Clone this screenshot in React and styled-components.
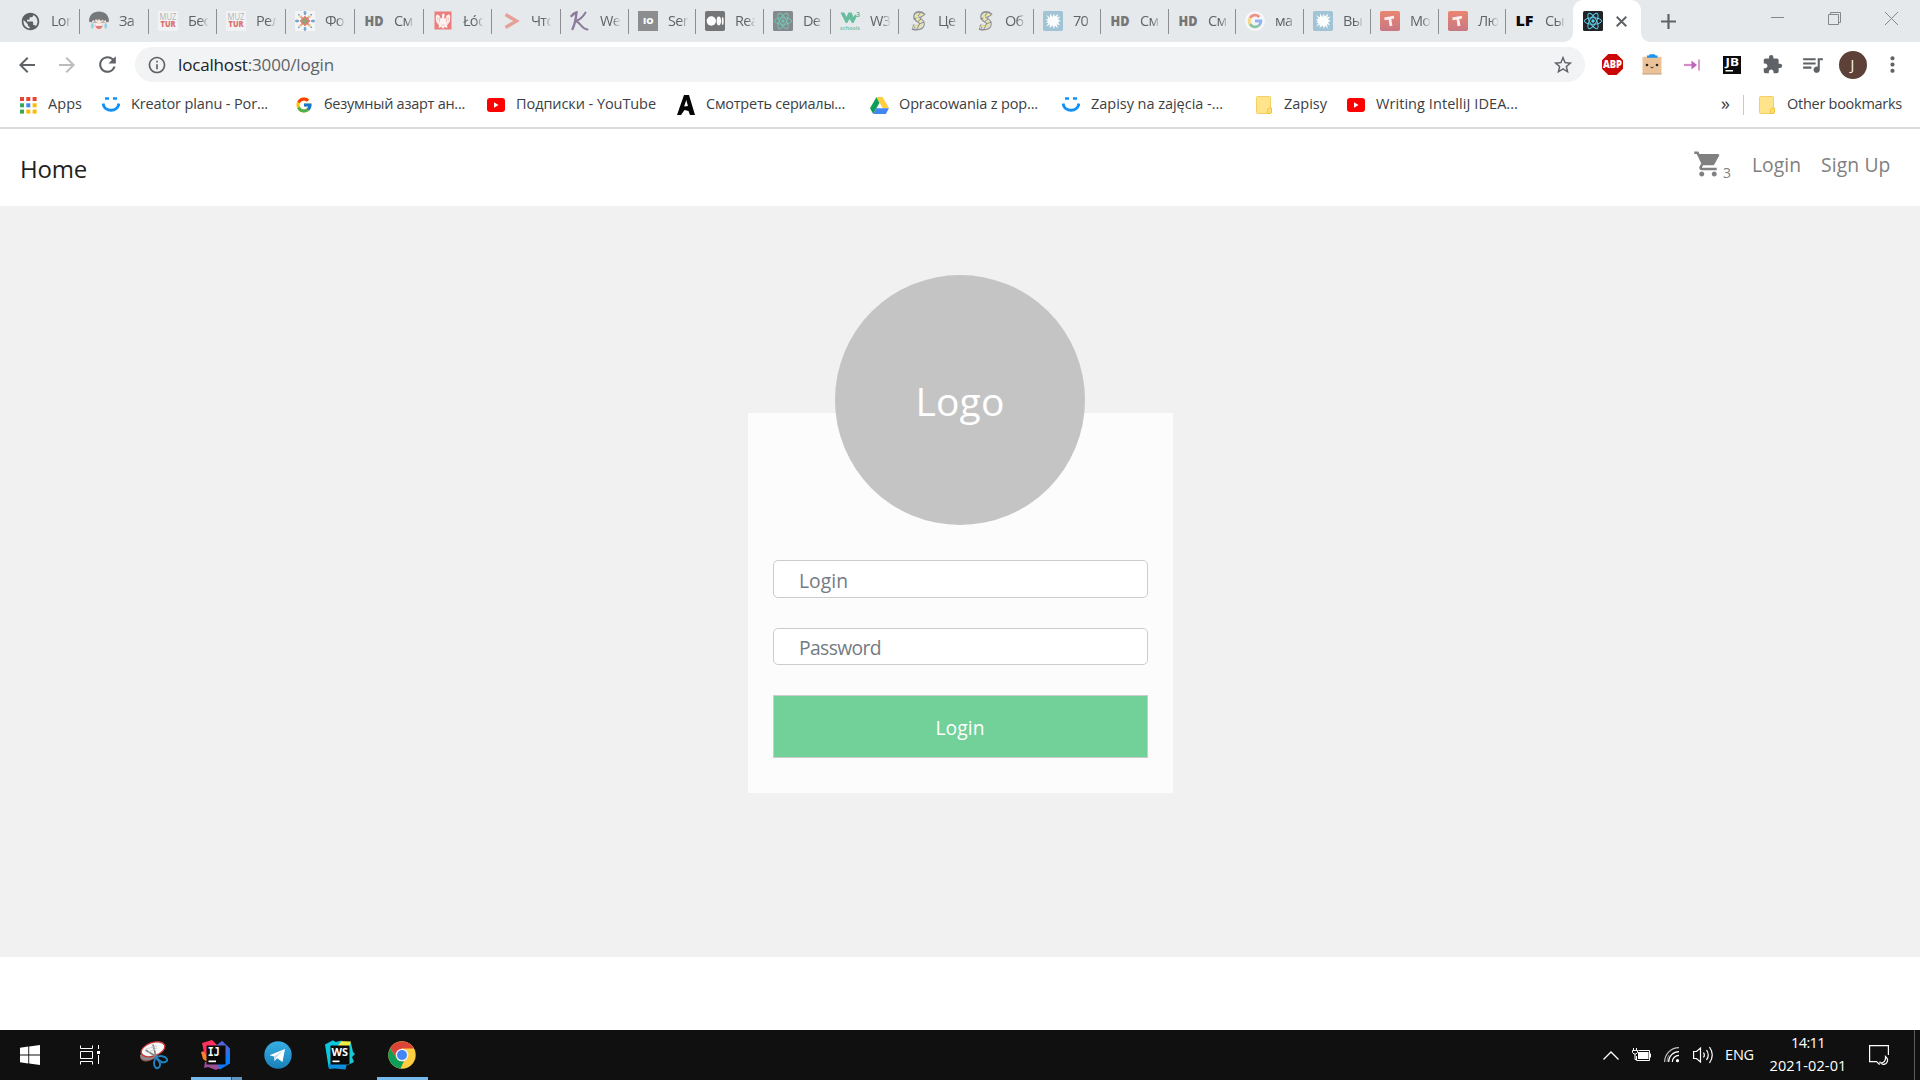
import React, { useLayoutEffect, useRef, useState } from "react";
import styled, { createGlobalStyle, css } from "styled-components";
import {
  MdPublic, MdArrowBack, MdArrowForward, MdRefresh, MdInfoOutline, MdStarBorder,
  MdExtension, MdQueueMusic, MdMoreVert, MdShoppingCart,
} from "react-icons/md";
import { FcGoogle } from "react-icons/fc";

const GlobalStyle = createGlobalStyle`
  * { box-sizing: border-box; }
  body { margin: 0; background: #fff; overflow: hidden; font-family: "Open Sans", "Noto Sans", sans-serif; }
  svg { display: block; flex: none; }
  button, input { font-family: inherit; }
`;

/* ---------- text with a fixed advance width ---------- */
const FitSpan = styled.span`
  display: inline-block;
  white-space: pre;
  flex: none;
`;

function Fit({ width, children }) {
  const ref = useRef(null);
  const [spacing, setSpacing] = useState(0);
  useLayoutEffect(() => {
    const natural = ref.current.getBoundingClientRect().width;
    setSpacing((width - natural) / ref.current.textContent.length);
  }, [width]);
  return <FitSpan ref={ref} style={{ letterSpacing: `${spacing}px` }}>{children}</FitSpan>;
}

/* ---------- small drawings ---------- */
const ReactMark = ({ bg, color }) => (
  <svg width="20" height="20" viewBox="0 0 20 20">
    <rect width="20" height="20" rx="1.5" fill={bg} />
    <g fill="none" stroke={color} strokeWidth="1">
      <ellipse cx="10" cy="10" rx="8.6" ry="3.3" />
      <ellipse cx="10" cy="10" rx="8.6" ry="3.3" transform="rotate(60 10 10)" />
      <ellipse cx="10" cy="10" rx="8.6" ry="3.3" transform="rotate(120 10 10)" />
    </g>
    <circle cx="10" cy="10" r="1.7" fill={color} />
  </svg>
);

const FaceMark = () => (
  <svg width="20" height="20" viewBox="0 0 20 20">
    <ellipse cx="10" cy="12" rx="8" ry="7.500" fill="#f1e4df" />
    <path d="M0 10.500C0 4 4 .5 10 .5S20 4 20 10.500l-2.500 1-1-2.500-1.500 1-1.500-1.500-1.500 1.500L10 8 8.500 9.500 7 8 5.500 10 4 9l-1.500 2.500z" fill="#77787a" />
    <path d="M4.500 11.500q1.500-1.500 3 0M12.500 11.500q1.500-1.500 3 0" stroke="#8a8583" fill="none" />
    <path d="M6.500 14h7c0 2.500-1.500 4-3.500 4s-3.500-1.500-3.500-4z" fill="#de7b79" />
    <path d="M7 14.200h6" stroke="#fff" strokeWidth="1.200" />
    <path d="M3.500 11.500c1.700 2 1.700 5-.2 6.500-2-1.500-2-4 .2-6.500zM16.500 11.500c2.200 2.500 2.200 5 .2 6.500-1.900-1.500-1.900-4.500-.2-6.500z" fill="#8fd2ee" />
  </svg>
);

const MuzMark = () => (
  <svg width="20" height="20" viewBox="0 0 20 20" fontFamily="Open Sans, sans-serif">
    <rect width="20" height="20" fill="#f1f2f3" />
    <text x="1.5" y="8.6" fontSize="8.2" fill="#b4b5b7" textLength="17" lengthAdjust="spacingAndGlyphs">MUZ</text>
    <text x="2.5" y="16.2" fontSize="8" fontWeight="800" fill="#dc7270" textLength="15" lengthAdjust="spacingAndGlyphs">TUR</text>
  </svg>
);

const OrnamentMark = () => (
  <svg width="20" height="20" viewBox="0 0 20 20">
    <rect width="20" height="20" fill="#f4f5f6" />
    <path d="M10 4.500l1.500 2 2.500-.7-.5 2.500 2 1.700-2 1.700.5 2.500-2.500-.7-1.500 2-1.500-2-2.500.7.500-2.500-2-1.700 2-1.700L6 5.800l2.500.7z" fill="#e0796f" />
    <path d="M10 7v6M7 10h6" stroke="#8aa877" strokeWidth="2" />
    <g fill="#6f9fca">
      <path d="M8 1.500h4l-2 2.500zM8 18.500h4L10 16zM1.500 8v4L4 10zM18.500 8v4L16 10z" />
      <path d="M9.300 0h1.400v4H9.300zM9.300 16h1.400v4H9.300zM0 9.300h4v1.400H0zM16 9.300h4v1.400h-4z" />
      <path d="M3 3h1.600v1.600H3zM15.400 3H17v1.600h-1.600zM3 15.400h1.600V17H3zM15.400 15.400H17V17h-1.600z" />
    </g>
    <g fill="#e9bd74"><circle cx="5.700" cy="5.700" r="1.300" /><circle cx="14.300" cy="5.700" r="1.300" /><circle cx="5.700" cy="14.300" r="1.300" /><circle cx="14.300" cy="14.300" r="1.300" /></g>
  </svg>
);

const TextMark = ({ children, color = "#757678", size = 13.5, width = 19 }) => (
  <svg width="20" height="20" viewBox="0 0 20 20" fontFamily="Open Sans, sans-serif">
    <text x=".5" y="15" fontSize={size} fontWeight="800" fill={color} textLength={width} lengthAdjust="spacingAndGlyphs">{children}</text>
  </svg>
);

const EagleMark = () => (
  <svg width="20" height="20" viewBox="0 0 20 20">
    <path d="M1.500.5h17v18h-17z" fill="#ec7d7c" />
    <path d="M8.800 3.500L11 2.300l.7 1.700-.7 2.500 1 1.500 1.700-3.500 2.300-1.200 1.200 2-.2 4.500-1.500 3-1-.5.300 2-1.300-.5 1.200 2.500-1.500.5-1.700-1L10 18.300l-1.500-2.500-1.700 1-1.500-.5 1.200-2.500-1.300.5.300-2-1 .5-1.500-3-.2-4.500 1.200-2L6.300 4.500 8 8l1-1.500V4.500z" fill="#fdf3f2" />
    <path d="M6.500 6.500v5M13.500 6.500v5M4.800 6v4M15.200 6v4M8.500 14l3 0" stroke="#eda5a3" strokeWidth=".6" />
  </svg>
);

const ChevronMark = () => (
  <svg width="20" height="20" viewBox="0 0 20 20"><path d="M4.500 3.500L15.500 10 4.500 16.500" fill="none" stroke="#e5a097" strokeWidth="3.400" /></svg>
);

const KMark = () => (
  <svg width="20" height="20" viewBox="0 0 20 20" fill="none" stroke="#8d7a9c" strokeLinecap="round">
    <path d="M1.500 5C3 3 5 2 6.500 1.500 6 7 5 13 2.500 18" strokeWidth="2.400" />
    <path d="M15.500 1.500C13 6 9 9 5.500 10 10 10.500 11 18 17.500 18.500" strokeWidth="2" />
  </svg>
);

const IoMark = () => (
  <svg width="20" height="20" viewBox="0 0 20 20" fontFamily="Open Sans, sans-serif">
    <rect width="20" height="20" fill="#8b8d8f" />
    <text x="5" y="13.200" fontSize="8.500" fontWeight="800" fill="#fff" textLength="10.500" lengthAdjust="spacingAndGlyphs">IO</text>
  </svg>
);

const MediumMark = () => (
  <svg width="20" height="20" viewBox="0 0 20 20">
    <rect width="20" height="20" rx="1.800" fill="#737577" />
    <circle cx="6.300" cy="10" r="4.700" fill="#fff" /><ellipse cx="13.800" cy="10" rx="2.200" ry="4.400" fill="#fff" /><ellipse cx="17.700" cy="10" rx=".9" ry="4" fill="#fff" />
  </svg>
);

const SchoolsMark = () => (
  <svg width="20" height="20" viewBox="0 0 20 20" fill="#69bd9f" fontFamily="Open Sans, sans-serif">
    <path d="M.5 1.500h3.800l2.200 4.500L8.300 1.500h3.400L13.500 6l1.500-2.500 2 1.500-3.500 7h-1.500L9.500 8l-2.300 4H5.700z" />
    <text x="16" y="5.500" fontSize="7" fontWeight="700">3</text>
    <text x="0" y="19" fontSize="6" fontWeight="600" textLength="20" lengthAdjust="spacingAndGlyphs">schools</text>
  </svg>
);

const SnakeMark = () => (
  <svg width="20" height="20" viewBox="0 0 20 20" fill="none">
    <path d="M15.500 5C13 2 8 2 8 6c0 3 6 3 6 7 0 3.500-5 4.500-9.500 3" stroke="#8f9091" strokeWidth="5.600" />
    <path d="M15 5C12.500 3 8.200 3 8.200 6c0 3 5.800 3 5.800 7 0 3-5 4-9 2.500" stroke="#dedfe0" strokeWidth="3.600" />
    <path d="M15 4.500C12 3 8.500 3.500 8.500 6c0 2.500 5 3.500 5 6.500 0 2.500-4 3.500-8 2.500" stroke="#e9e88c" strokeWidth="1.800" />
    <path d="M12.500 1.500L10 5M16 4l-4 2.500M13 8l-3.500 3M16.500 11L11 13M11 14l-2 4M5.500 8l3-1M5 14l2 3" stroke="#7b7c7e" strokeWidth=".8" />
  </svg>
);

const SplashMark = () => (
  <svg width="20" height="20" viewBox="0 0 20 20">
    <rect width="20" height="20" rx="1.800" fill="#a0c3d6" />
    <path d="M9.500 6L11 2.500l.7 3L15.500 2.500l-1.500 4 3.500-1L15 8.500l3 1.500-3 1 2 3.500-3.200-1.500L15 17.500l-3-3-1 3.500-1.300-3.500L6.500 17l.5-3.500L3 15.500 5.500 12 3 11.500 5 10 2.500 8.500l3-.5L3.500 4 7 6.500 7 2.500z" fill="#fbfdfd" />
  </svg>
);

const GoogleTabMark = () => (
  <svg width="20" height="20" viewBox="0 0 20 20">
    <circle cx="10" cy="10" r="10" fill="#f5f6f7" />
    <g fill="none" strokeWidth="2.800">
      <path d="M14.300 6A5.900 5.900 0 0 0 5 7" stroke="#ee9088" />
      <path d="M5 7a5.900 5.900 0 0 0 0 6" stroke="#f7d584" />
      <path d="M5 13a5.900 5.900 0 0 0 8.800 1.500" stroke="#8ac69c" />
      <path d="M13.800 14.500A5.900 5.900 0 0 0 15.900 10H10" stroke="#8fb4f1" />
    </g>
  </svg>
);

const TMark = () => (
  <svg width="20" height="20" viewBox="0 0 20 20">
    <defs><linearGradient id="tg" x2="0" y2="1"><stop stopColor="#ea8570" /><stop offset="1" stopColor="#c77883" /></linearGradient></defs>
    <rect width="20" height="20" rx="1.800" fill="url(#tg)" />
    <path d="M4.500 7.800l9.500-1.600M9.800 7l1.200 8" stroke="#fbeeee" strokeWidth="2.800" fill="none" />
  </svg>
);

const AppsMark = () => (
  <svg width="17" height="17" viewBox="0 0 17 17">
    {["#ea4335", "#ea4335", "#ea4335", "#34a853", "#4285f4", "#fbbc04", "#34a853", "#fbbc04", "#fbbc04"].map((c, i) => (
      <rect key={i} x={(i % 3) * 6.3} y={Math.floor(i / 3) * 6.3} width="4" height="4" fill={c} />
    ))}
  </svg>
);

const SmileMark = () => (
  <svg width="18" height="16" viewBox="0 0 18 16">
    <path d="M3 1.500h4M11 1.500h4" stroke="#1191f5" strokeWidth="2.400" />
    <path d="M1 6.500c1.500 9 14.500 9 16 0" stroke="#1191f5" strokeWidth="3" fill="none" />
  </svg>
);

const YoutubeMark = () => (
  <svg width="18" height="14" viewBox="0 0 18 14"><rect width="18" height="14" rx="3" fill="#f00" /><path d="M7 4.200v5.600L11.500 7z" fill="#fff" /></svg>
);

const AnimeMark = () => (
  <svg width="18" height="20" viewBox="0 0 18 20">
    <path d="M0 20L7 0h5l6 20h-5l-1.500-4-4-1L4 20zM9.300 5l-2.200 6.500h4z" fill="#050505" fillRule="evenodd" />
    <path d="M3 14l10-2" stroke="#050505" strokeWidth="2.400" />
  </svg>
);

const DriveMark = () => (
  <svg width="19" height="17" viewBox="0 0 19 17">
    <path d="M6.500 0L0 11.300 3.200 17 9.500 5.700z" fill="#0f9d58" />
    <path d="M6.500 0h6L19 11.300h-6.300z" fill="#ffcd40" />
    <path d="M6.400 11.300H19L15.800 17H3.200z" fill="#4285f4" />
  </svg>
);

const FolderMark = () => (
  <svg width="16" height="18" viewBox="0 0 16 18">
    <path d="M1.500.5h12q1 0 1 1v16h-13q-1 0-1-1v-15q0-1 1-1z" fill="#ffe48c" stroke="#f4d062" />
    <path d="M11.500 17.500v-4l1.500-1.500h2.500v4q0 1.500-1.500 1.500z" fill="#ffdf6e" stroke="#eec440" />
  </svg>
);

const AbpMark = () => (
  <svg width="21" height="21" viewBox="0 0 21 21" fontFamily="Open Sans, sans-serif">
    <path d="M6.300 0h8.400L21 6.300v8.400L14.700 21H6.300L0 14.700V6.300z" fill="#cb0606" />
    <text x="1" y="14.200" fontSize="10" fontWeight="800" fill="#fff" textLength="19" lengthAdjust="spacingAndGlyphs">ABP</text>
  </svg>
);

const BagMark = () => (
  <svg width="20" height="21" viewBox="0 0 20 21">
    <rect x=".5" y="2.800" width="19" height="17.700" rx="1" fill="#ebc298" />
    <path d="M.5 19h19v1.500H.5z" fill="#cfb292" />
    <path d="M5 3.800V1.500h2L7.800.3h5l.7 1.200h2v2.300z" fill="#1d93ee" />
    <circle cx="5" cy="11" r="1.300" fill="#222" /><circle cx="15" cy="11" r="1.300" fill="#222" />
    <path d="M8.500 13q1.500 1.800 3 0" stroke="#333" fill="none" />
  </svg>
);

const JumpMark = () => (
  <svg width="16" height="12" viewBox="0 0 16 12"><path d="M0 6h9" stroke="#d48bca" strokeWidth="2.200" /><path d="M7.500 1.500L13 6l-5.500 4.500z" fill="#c063b4" /><path d="M15 .5v11" stroke="#c77cbd" strokeWidth="1.500" /></svg>
);

const JbMark = () => (
  <svg width="18" height="18" viewBox="0 0 18 18" fontFamily="Open Sans, sans-serif">
    <rect width="18" height="18" fill="#0b0b0b" />
    <text x="2.500" y="10" fontSize="10.500" fontWeight="700" fill="#fff" textLength="13.500" lengthAdjust="spacingAndGlyphs">JB</text>
    <rect x="2.500" y="14" width="7.500" height="1.500" fill="#fff" />
  </svg>
);

const WindowsMark = () => (
  <svg width="20" height="20" viewBox="0 0 20 20" fill="#fff"><path d="M0 2.700l8.300-1.100v7.900H0zM9.200 1.500L20 0v9.500H9.200zM0 10.400h8.300v8L0 17.300zM9.200 10.400H20V20L9.200 18.500z" /></svg>
);

const TaskViewMark = () => (
  <svg width="20" height="20" viewBox="0 0 20 20" fill="none" stroke="#fff">
    <path d="M.5.500v3h12v-3M.5 19.500v-3h12v3M.5 6.500h12v7H.5zM18.500 0v4M18.500 10v9" /><rect x="17" y="6" width="3" height="3" fill="#fff" stroke="none" />
  </svg>
);

const SnipMark = () => (
  <svg width="28" height="29" viewBox="0 0 28 29">
    <path d="M0 14.500C0 21 7 22 14 17.500l4-3L2 11.500z" fill="#8b8b8b" />
    <path d="M0 15.500C1.500 21 8 21 13 18" fill="none" stroke="#8c3434" strokeWidth=".8" />
    <ellipse cx="13" cy="8.300" rx="12.300" ry="6.700" fill="#f7f7f7" stroke="#c63434" strokeWidth="1.300" transform="rotate(-19 13 8.300)" />
    <path d="M5.500 9l11.500 7M13 3.500L16 16" stroke="#858585" strokeWidth="1.700" />
    <path d="M7 12l10-5M6 8l11-3" stroke="#cfcfcf" />
    <g fill="none" stroke="#2083c4" strokeWidth="1.900">
      <path d="M16 16.500c4-2.500 9-1.500 11 1.500 1 2.500-3 4-5.500 3-2.500-1-3-3-5.500-4.500z" />
      <path d="M16 16.500c-2 2.500-3 7-.5 10 2 2 5-.5 4.500-4-.5-2.500-2.500-3.500-4-6z" />
    </g>
  </svg>
);

const IdeaMark = () => (
  <svg width="30" height="30" viewBox="0 0 30 30" fontFamily="DejaVu Sans Mono, monospace">
    <path d="M0 12l7-2 2 14-7-5z" fill="#f9812a" />
    <path d="M1 3L11 0l5 5 2 9-10 5-5-7z" fill="#fe315d" />
    <path d="M17 6l4-5 8 7.500v15L19 29.500l-8-5z" fill="#087cfa" />
    <path d="M14.500 6L21 1l7 7-3 9-8-4z" fill="#5562d8" />
    <path d="M4 22l10-1 5 7-4 2-8-3-4 1z" fill="#9a4d99" />
    <rect x="5.500" y="5.500" width="19" height="19" fill="#0a0a0a" />
    <text x="6.800" y="15.700" fontSize="11.500" fontWeight="700" fill="#fff" textLength="12" lengthAdjust="spacingAndGlyphs">IJ</text>
    <rect x="7.500" y="20.500" width="7.500" height="1.700" fill="#fff" />
  </svg>
);

const TelegramMark = () => (
  <svg width="28" height="28" viewBox="0 0 28 28">
    <defs><linearGradient id="tl" x2="0" y2="1"><stop stopColor="#37aee2" /><stop offset="1" stopColor="#1a80ba" /></linearGradient></defs>
    <circle cx="14" cy="14" r="13.700" fill="url(#tl)" />
    <path d="M5.500 14.200L21 8l-2.500 13-5.300-3.700-2.700 2.700-.5-4.500z" fill="#fff" /><path d="M10 15.500L19 9.500l-7 7.300-1.500 3.200z" fill="#bfdcec" />
  </svg>
);

const StormMark = () => (
  <svg width="30" height="30" viewBox="0 0 30 30" fontFamily="Open Sans, sans-serif">
    <path d="M17 4l9-1 2 9 2 2-3 3 2 5-6 3-6-2z" fill="#17c9d5" />
    <path d="M14 1l12 .5-2 6.500H12z" fill="#f3ee45" />
    <path d="M0 4.500L8 .3 10.500 2 17 .5 12 7l-3 21-5.500-1z" fill="#0cc7dd" />
    <path d="M3 25l6-3 13 1.500-1.500 6L10 28.500 4 29z" fill="#0b8fdc" />
    <rect x="5.500" y="5.500" width="19" height="19" fill="#0a0a0a" />
    <text x="6.500" y="15.700" fontSize="11" fontWeight="700" fill="#fff" textLength="16.500" lengthAdjust="spacingAndGlyphs">WS</text>
    <rect x="7.500" y="20.500" width="7" height="1.700" fill="#fff" />
  </svg>
);

const ChromeMark = () => (
  <svg width="28" height="28" viewBox="0 0 28 28">
    <circle cx="14" cy="14" r="13.700" fill="#ffcd40" />
    <path d="M2.150 7.150A13.700 13.700 0 0 1 25.900 7.600H14L8.500 17.200z" fill="#db4437" />
    <path d="M2.150 7.150L8.500 17.200Q11 21 16 20l-3.500 7.600A13.700 13.700 0 0 1 2.150 7.150z" fill="#109d58" />
    <circle cx="14" cy="14" r="6.300" fill="#f1f1f1" /><circle cx="14" cy="14" r="5" fill="#4285f4" />
  </svg>
);

/* ---------- tab strip ---------- */
const TabStrip = styled.div`
  display: flex;
  height: 42px;
  padding-left: 12px;
  background: #e6e9ec;
`;
const Tab = styled.div`
  display: flex;
  align-items: center;
  flex: none;
  width: ${(p) => p.$w}px;
  padding-left: 9px;
`;
const TabLabel = styled.span`
  width: 20px;
  margin: 0 auto 0 10px;
  overflow: hidden;
  white-space: nowrap;
  color: #5f6368;
  font-size: 14.500px;
  line-height: 22px;
  letter-spacing: -0.7px;
  mask-image: linear-gradient(90deg, #000 60%, transparent 105%);
`;
const TabRule = styled.i`
  width: 1px;
  height: 25px;
  background: #8b8e92;
`;
const ActiveTab = styled.div`
  position: relative;
  display: flex;
  align-items: center;
  flex: none;
  width: 68px;
  margin-left: 1px;
  padding: 0 14px 0 10px;
  justify-content: space-between;
  background: #fff;
  border-radius: 10px 10px 0 0;
  &::before, &::after {
    content: "";
    position: absolute;
    bottom: 0;
    width: 9px;
    height: 9px;
  }
  &::before { right: 100%; background: radial-gradient(circle at 0 0, transparent 8.500px, #fff 9px); }
  &::after { left: 100%; background: radial-gradient(circle at 100% 0, transparent 8.500px, #fff 9px); }
`;
const NewTab = styled.div`
  display: grid;
  place-items: center;
  width: 55px;
  margin-right: auto;
`;
const WindowButton = styled.div`
  display: grid;
  place-items: center;
  width: 57px;
  height: 36px;
`;
const GlobeIcon = styled(MdPublic)`
  flex: none;
  margin: 0 0 0 -1px;
`;

const TABS = [
  [68, <GlobeIcon size={21} color="#5c6063" />, "Lor"],
  [69, <FaceMark />, "За"],
  [68, <MuzMark />, "Бес"],
  [69, <MuzMark />, "Рел"],
  [69, <OrnamentMark />, "Фо"],
  [69, <TextMark>HD</TextMark>, "См"],
  [68, <EagleMark />, "Łód"],
  [69, <ChevronMark />, "Что"],
  [68, <KMark />, "We"],
  [67, <IoMark />, "Ser"],
  [68, <MediumMark />, "Rea"],
  [67, <ReactMark bg="#85888c" color="#73c3b3" />, "De"],
  [68, <SchoolsMark />, "W3"],
  [67, <SnakeMark />, "Це"],
  [68, <SnakeMark />, "Об"],
  [67, <SplashMark />, "70"],
  [68, <TextMark>HD</TextMark>, "См"],
  [67, <TextMark>HD</TextMark>, "См"],
  [68, <GoogleTabMark />, "ма"],
  [67, <SplashMark />, "Вы"],
  [68, <TMark />, "Мо"],
  [67, <TMark />, "Лю"],
];

/* ---------- toolbar ---------- */
const Toolbar = styled.div`
  display: flex;
  align-items: center;
  height: 45px;
  padding: 0 8px 0 7px;
  background: #fff;
  color: #5f6368;
`;
const ToolSlot = styled.div`
  display: grid;
  place-items: center;
  flex: none;
  width: 40px;
  color: ${(p) => p.$color || "#5f6368"};
`;
const Omnibox = styled.div`
  display: flex;
  align-items: center;
  flex: 1;
  height: 35px;
  margin: 0 7px 0 8px;
  padding: 0 11px 0 12px;
  border-radius: 18px;
  background: #f1f3f4;
`;
const Url = styled.div`
  flex: 1;
  margin-left: 11px;
  font-size: 17px;
  line-height: 24px;
  color: #5f6368;
`;
const Host = styled.span` color: #202124; `;
const Avatar = styled.div`
  width: 28px;
  height: 28px;
  margin-left: 1px;
  border-radius: 50%;
  background: #5d4037;
  color: #fff;
  font-size: 14px;
  line-height: 27px;
  text-align: center;
`;

/* ---------- bookmarks ---------- */
const BookmarkBar = styled.div`
  display: flex;
  align-items: center;
  height: 42px;
  padding: 0 0 5px 18px;
  border-bottom: 2px solid #dadce0;
  background: #fff;
  color: #3c4043;
  font-size: 14.500px;
  line-height: 22px;
`;
const Bookmark = styled.div`
  display: flex;
  align-items: center;
  gap: 10px;
  flex: none;
  width: ${(p) => p.$w}px;
  ${FitSpan} { margin-bottom: 1px; }
`;
const BookmarkIcon = styled.span`
  display: grid;
  place-items: center;
  width: 20px;
  height: 22px;
  padding-top: 1px;
`;
const Overflow = styled.span`
  width: 22px;
  margin-left: auto;
  padding-bottom: 3px;
  font-size: 18px;
`;
const BookmarkRule = styled.i`
  width: 1px;
  height: 20px;
  margin-right: 13px;
  background: #c6c9cc;
`;

const BOOKMARKS = [
  [83, <AppsMark />, "Apps", 34],
  [193, <SmileMark />, "Kreator planu - Por...", 137],
  [192, <FcGoogle size={18} />, "безумный азарт ан...", 141],
  [190, <YoutubeMark />, "Подписки - YouTube", 140],
  [193, <AnimeMark />, "Смотреть сериалы...", 139],
  [192, <DriveMark />, "Opracowania z pop...", 139],
  [193, <SmileMark />, "Zapisy na zajęcia -...", 132],
  [92, <FolderMark />, "Zapisy", 43],
  [175, <YoutubeMark />, "Writing IntelliJ IDEA...", 142],
];

/* ---------- page ---------- */
const SiteHeader = styled.header`
  display: flex;
  align-items: flex-start;
  justify-content: space-between;
  height: 77px;
  padding: 0 29px 0 20px;
  background: #fff;
`;
const Brand = styled.a`
  padding-top: 24px;
  color: #1f1f1f;
  font-size: 24px;
  line-height: 32px;
`;
const NavLinks = styled.nav`
  display: flex;
  align-items: flex-start;
  color: #808080;
  font-size: 19.300px;
  line-height: 30px;
`;
const CartLink = styled.a`
  display: flex;
  width: 59px;
  padding-top: 20px;
`;
const CartCount = styled.sub`
  padding: 14px 0 0 0;
  font-size: 14px;
  line-height: 20px;
  vertical-align: baseline;
`;
const NavLink = styled.a`
  width: ${(p) => p.$w}px;
  padding-top: 21px;
`;
const Main = styled.main`
  display: flex;
  justify-content: center;
  align-items: flex-start;
  height: 751px;
  padding-top: 207px;
  background: #f1f1f1;
`;
const Card = styled.div`
  display: flex;
  flex-direction: column;
  align-items: center;
  width: 425px;
  height: 380px;
  margin-left: 1px;
  background: #fcfcfc;
`;
const Logo = styled.div`
  display: grid;
  place-items: center;
  flex: none;
  width: 250px;
  height: 250px;
  margin: -138px 1px 35px 0;
  padding-top: 1px;
  border-radius: 50%;
  background: #c4c4c4;
  color: #fff;
  font-size: 39px;
  line-height: 56px;
`;
const Field = styled.div`
  flex: none;
  width: 375px;
  height: ${(p) => p.$h}px;
  margin-bottom: 30px;
  padding: ${(p) => p.$top}px 0 0 25px;
  border: 1px solid #ccc;
  border-radius: 5px;
  background: #fff;
  color: #747b82;
  font-size: 19.300px;
  line-height: 30px;
`;
const Submit = styled.button`
  flex: none;
  width: 375px;
  height: 63px;
  padding: 2px 1px 0 0;
  border: 1px solid #ccc;
  background: #71d199;
  color: #fff;
  font-size: 19.300px;
  line-height: 30px;
`;
const Spacer = styled.div` height: 73px; background: #fff; `;

/* ---------- taskbar ---------- */
const Taskbar = styled.footer`
  display: flex;
  height: 50px;
  background: #101010;
  color: #fff;
`;
const SystemSlot = styled.div`
  display: grid;
  place-items: center;
  width: 60px;
`;
const Pinned = styled.div`
  display: flex;
  margin-left: 3px;
`;
const AppSlot = styled.div`
  display: grid;
  place-items: center;
  width: 62px;
  ${(p) => p.$open && css`
    background: linear-gradient(#76b9ed, #76b9ed) 6px 47px / 51px 3px no-repeat;
  `}
  ${(p) => p.$stacked && css`
    background:
      linear-gradient(90deg, #76b9ed 40px, #34536b 40px 41px, #5e94be 41px) 6px 47px / 51px 3px no-repeat;
  `}
`;
const Tray = styled.div`
  display: flex;
  align-items: center;
  margin-left: auto;
`;
const TrayItem = styled.div`
  display: grid;
  place-items: center;
  width: ${(p) => p.$w}px;
`;
const Language = styled.div`
  width: 36px;
  padding-left: 5px;
  font-size: 14.500px;
  line-height: 22px;
`;
const Clock = styled.div`
  display: flex;
  flex-direction: column;
  align-items: center;
  width: 104px;
  margin-top: -2px;
  font-size: 14.500px;
  line-height: 23px;
`;
const ShowDesktop = styled.div`
  width: 6px;
  height: 50px;
  margin-left: 16px;
  border-left: 1px solid #5b5b5b;
`;

export default function App() {
  return (
    <>
      <GlobalStyle />
      <TabStrip>
        {TABS.map(([w, icon, label], i) => (
          <Tab key={i} $w={w}>{icon}<TabLabel>{label}</TabLabel><TabRule /></Tab>
        ))}
        <Tab $w={66}><TextMark color="#0a0a0a" size={14} width={18}>LF</TextMark><TabLabel>Сы</TabLabel></Tab>
        <ActiveTab>
          <ReactMark bg="#212327" color="#61cde9" />
          <svg width="11" height="11" viewBox="0 0 11 11" stroke="#5f6368" strokeWidth="2"><path d="M.7.7l9.600 9.600M10.300.7L.7 10.300" /></svg>
        </ActiveTab>
        <NewTab><svg width="15" height="15" viewBox="0 0 15 15" stroke="#5f6368" strokeWidth="2.200"><path d="M7.500 0v15M0 7.500h15" /></svg></NewTab>
        <WindowButton><svg width="13" height="13" viewBox="0 0 13 13" stroke="#858789"><path d="M0 5.500h13" /></svg></WindowButton>
        <WindowButton><svg width="13" height="13" viewBox="0 0 13 13" fill="none" stroke="#858789"><path d="M.5 2.500h10v10H.500zM2.500 2.500v-2h10v10h-2" /></svg></WindowButton>
        <WindowButton><svg width="13" height="13" viewBox="0 0 13 13" stroke="#858789"><path d="M0 0l13 13M13 0L0 13" /></svg></WindowButton>
      </TabStrip>

      <Toolbar>
        <ToolSlot><MdArrowBack size={24} /></ToolSlot>
        <ToolSlot $color="#babcbe"><MdArrowForward size={24} /></ToolSlot>
        <ToolSlot><MdRefresh size={25} /></ToolSlot>
        <Omnibox>
          <MdInfoOutline size={20} />
          <Url><Fit width={156}><Host>localhost</Host>:3000/login</Fit></Url>
          <MdStarBorder size={22} />
        </Omnibox>
        <ToolSlot><AbpMark /></ToolSlot>
        <ToolSlot><BagMark /></ToolSlot>
        <ToolSlot><JumpMark /></ToolSlot>
        <ToolSlot><JbMark /></ToolSlot>
        <ToolSlot><MdExtension size={21} /></ToolSlot>
        <ToolSlot><MdQueueMusic size={25} /></ToolSlot>
        <ToolSlot><Avatar>J</Avatar></ToolSlot>
        <ToolSlot><MdMoreVert size={25} /></ToolSlot>
      </Toolbar>

      <BookmarkBar>
        {BOOKMARKS.map(([w, icon, label, textWidth], i) => (
          <Bookmark key={i} $w={w}><BookmarkIcon>{icon}</BookmarkIcon><Fit width={textWidth}>{label}</Fit></Bookmark>
        ))}
        <Overflow>»</Overflow>
        <BookmarkRule />
        <Bookmark $w={163}><BookmarkIcon><FolderMark /></BookmarkIcon><Fit width={115}>Other bookmarks</Fit></Bookmark>
      </BookmarkBar>

      <SiteHeader>
        <Brand><Fit width={67}>Home</Fit></Brand>
        <NavLinks>
          <CartLink><MdShoppingCart size={30} /><CartCount>3</CartCount></CartLink>
          <NavLink $w={69}><Fit width={49}>Login</Fit></NavLink>
          <NavLink $w={70}><Fit width={69.5}>Sign Up</Fit></NavLink>
        </NavLinks>
      </SiteHeader>
      <Main>
        <Card>
          <Logo><Fit width={89}>Logo</Fit></Logo>
          <Field $h={38} $top={5}><Fit width={49}>Login</Fit></Field>
          <Field $h={37} $top={4}><Fit width={82}>Password</Fit></Field>
          <Submit><Fit width={49}>Login</Fit></Submit>
        </Card>
      </Main>
      <Spacer />

      <Taskbar>
        <SystemSlot><WindowsMark /></SystemSlot>
        <SystemSlot><TaskViewMark /></SystemSlot>
        <Pinned>
          <AppSlot><SnipMark /></AppSlot>
          <AppSlot $stacked><IdeaMark /></AppSlot>
          <AppSlot><TelegramMark /></AppSlot>
          <AppSlot><StormMark /></AppSlot>
          <AppSlot $open><ChromeMark /></AppSlot>
        </Pinned>
        <Tray>
          <TrayItem $w={30}><svg width="16" height="9" viewBox="0 0 16 9" fill="none" stroke="#fff" strokeWidth="1.300"><path d="M.5 8.500L8 1l7.500 7.500" /></svg></TrayItem>
          <TrayItem $w={31}>
            <svg width="20" height="14" viewBox="0 0 20 14" fill="none" stroke="#fff"><path d="M6.500 2.500h11v10h-13V8M18.500 5.500v4" /><rect x="6" y="4" width="10.500" height="7" fill="#fff" stroke="none" /><path d="M1.500 0v2M4.500 0v2M.5 2.500h5v2l-1.500 1.500h-2L.5 4.500zM3 6v5.500h1.500" /></svg>
          </TrayItem>
          <TrayItem $w={29}>
            <svg width="16" height="16" viewBox="0 0 16 16" fill="none" stroke="#fff" strokeWidth="1.200"><path d="M.6 15A14.400 14.400 0 0 1 15 .6" opacity=".75" /><path d="M4.600 15A10.400 10.400 0 0 1 15 4.600M8.300 15A6.700 6.700 0 0 1 15 8.300" /><path d="M3 15A12 12 0 0 1 5 8" opacity=".4" /><circle cx="13.500" cy="13.700" r="1.600" fill="#fff" stroke="none" /></svg>
          </TrayItem>
          <TrayItem $w={34}>
            <svg width="21" height="18" viewBox="0 0 21 18" fill="none" stroke="#fff" strokeWidth="1.200"><path d="M.6 5.500h2.900L7.500 2v14l-4-3.500H.6zM10.500 6.500q1.700 2.500 0 5M13.500 4q3.500 5 0 10" /><path d="M16.500 1q5.500 8 0 16" /></svg>
          </TrayItem>
          <Language><Fit width={29}>ENG</Fit></Language>
          <Clock><Fit width={34}>14:11</Fit><Fit width={77}>2021-02-01</Fit></Clock>
          <TrayItem $w={38}>
            <svg width="20" height="20" viewBox="0 0 20 20" fill="none" stroke="#fff" strokeWidth="1.200"><path d="M19.400 10V.6H.6v16h7l3 3M11 16.600v2" /><path d="M16.500 11.500q4 3.500.5 7-3 2-5-.5 5-.5 4.500-6.500z" /></svg>
          </TrayItem>
          <ShowDesktop />
        </Tray>
      </Taskbar>
    </>
  );
}
